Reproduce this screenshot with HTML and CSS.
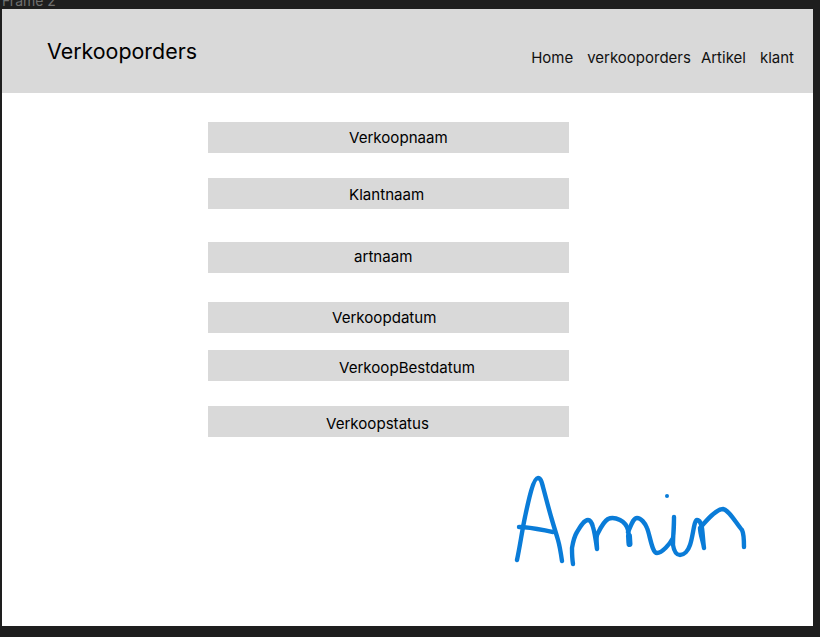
FILE: index.html
```html
<!DOCTYPE html>
<html lang="en">
<head>
  <meta charset="UTF-8" />
  <meta name="viewport" content="width=device-width, initial-scale=1.0"/>
  <title>Verkooporders</title>
  <link rel="stylesheet" href="styles.css">
</head>
<body>
  <div class="frame-label">Frame 2</div>
  <main class="frame">
    <header class="topbar">
      <h1 class="title">Verkooporders</h1>
      <nav class="nav">
        <a class="nav-home">Home</a>
        <a class="nav-orders">verkooporders</a>
        <a class="nav-artikel">Artikel</a>
        <a class="nav-klant">klant</a>
      </nav>
    </header>
    <section class="fields">
      <div class="field f-naam">Verkoopnaam</div>
      <div class="field f-klant">Klantnaam</div>
      <div class="field f-art">artnaam</div>
      <div class="field f-datum">Verkoopdatum</div>
      <div class="field f-best">VerkoopBestdatum</div>
      <div class="field f-status">Verkoopstatus</div>
    </section>
    <!-- handtekening -->
    <svg class="signature" width="260" height="120" viewBox="500 460 260 120" fill="none" stroke="#0a7cd8" stroke-width="4.4" stroke-linecap="round" stroke-linejoin="round">
      <path d="M517 560C520 546 522 531 525 517C528 503 533 478 538 478C541 478 542 483 543 487C546 498 549 510 552 520C554 527 556 533 558 540C560 547 561 554 562 561"/>
      <path d="M519 527C531 527 542 530 553 532"/>
      <path d="M573 564C572 558 572 553 572 548C573 542 574 537 577 532C580 527 584 520 588 520C590 520 592 523 593 527C595 534 596 542 597 549C597 544 596 539 597 535C600 529 603 522 608 519C612 517 616 518 620 520C624 522 627 526 628 530C629 534 629 539 629 543"/>
      <path d="M629 536L629.5 544" stroke-width="6"/>
      <path d="M628 532C631 526 633 518 637 518C641 518 645 523 647 528C650 535 652 553 657 553C662 553 670 544 673 538C674 531 674 524 674 517C674 526 673 536 673 545C674 551 676 555 680 555C684 555 688 551 690 545C693 537 694 520 697 520C700 520 701 524 702 528C703 535 703 541 704 548C703 541 700 534 700 528C706 521 716 509 723 509C729 510 736 523 742 530C744 534 744 541 744 547"/>
      <circle cx="667" cy="496" r="2" fill="#0a7cd8" stroke="none"/>
    </svg>
  </main>
</body>
</html>
```

FILE: styles.css
```css
html, body {
  height: 100%;
}

body {
  margin: 0;
  background: #1e1e1e;
  font-family: Inter, "Liberation Sans", sans-serif;
  color: #000;
  overflow: hidden;
}

.frame-label {
  height: 9px;
  margin-left: 2px;
  font-size: 14px;
  line-height: 1px;
  color: #6f6f6f;
  white-space: nowrap;
}

.frame {
  position: relative;
  width: 811px;
  height: 617px;
  margin-left: 2px;
  background: #fff;
}

.topbar {
  display: flex;
  justify-content: space-between;
  height: 84px;
  background: #d9d9d9;
}

.title {
  margin: 29px 0 0 45px;
  font-size: 21.4px;
  font-weight: 400;
  line-height: 27px;
}

.nav {
  display: flex;
  margin: 39px 19px 0 0;
  font-size: 15px;
  line-height: 20px;
  color: #111;
}

.nav-orders {
  margin-left: 14px;
}

.nav-artikel {
  margin-left: 10px;
}

.nav-klant {
  margin-left: 14px;
}

.fields {
  display: flex;
  flex-direction: column;
  width: 361px;
  margin: 29px 0 0 206px;
}

.field {
  box-sizing: border-box;
  height: 31px;
  background: #d9d9d9;
  font-size: 15.1px;
  line-height: 18px;
  padding-top: 7px;
}

.f-naam { padding-left: 141px; }
.f-klant { margin-top: 25px; padding-left: 141px; padding-top: 8px; }
.f-art { margin-top: 33px; padding-left: 146px; padding-top: 6px; }
.f-datum { margin-top: 29px; padding-left: 124px; }
.f-best { margin-top: 17px; padding-left: 131px; padding-top: 9px; }
.f-status { margin-top: 25px; padding-left: 118px; padding-top: 9px; }

.signature {
  position: absolute;
  left: 498px;
  top: 451px;
}
```
